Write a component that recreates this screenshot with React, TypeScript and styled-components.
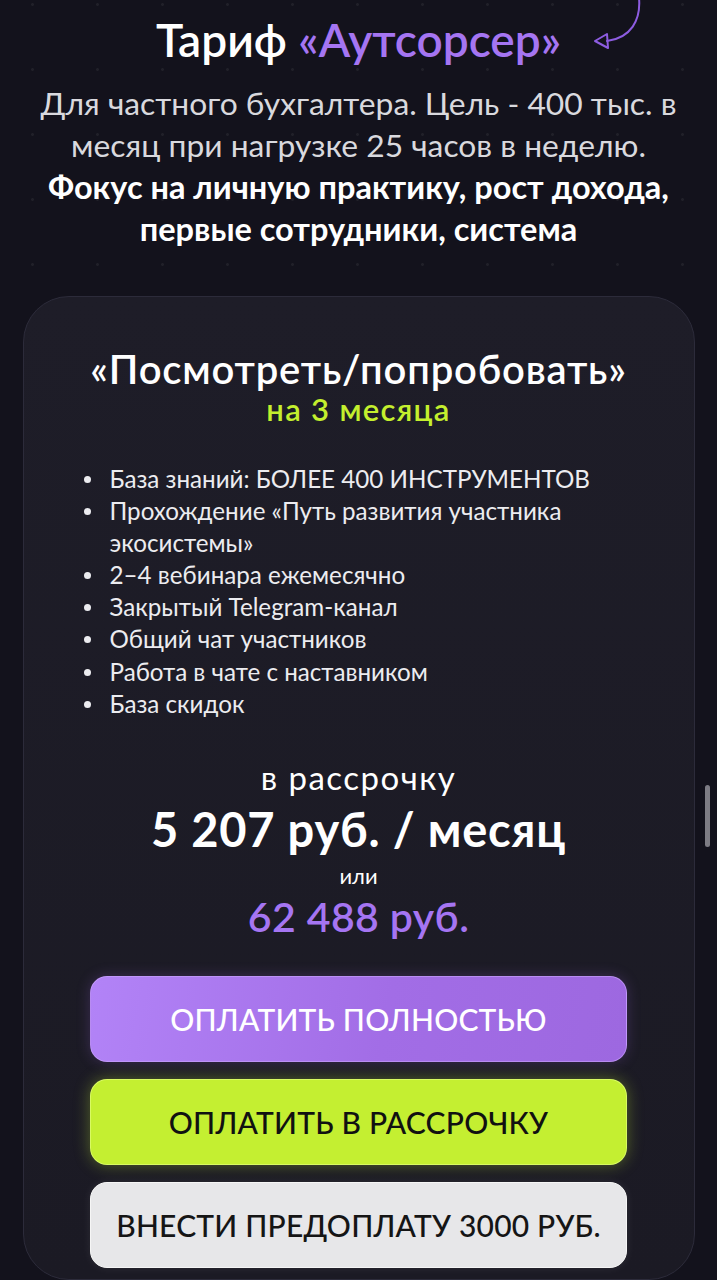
import React from "react";
import styled, { createGlobalStyle } from "styled-components";

const GlobalStyle = createGlobalStyle`
    html, body {
        margin: 0;
        padding: 0;
        background: #13121c;
    }
    body {
        font-family: Lato, "Noto Sans", sans-serif;
        color: #ffffff;
        -webkit-font-smoothing: antialiased;
    }
`

const Page = styled.main`
    width: 717px;
    height: 1280px;
    overflow: hidden;
    position: relative;
    background-color: #13121c;
    background-image: radial-gradient(circle, rgba(255,255,255,0.06) 1.2px, transparent 1.6px);
    background-size: 65px 65px;
    background-position: 0px 37px;

    display: flex;
    flex-direction: column;
    align-items: center;
`

const Header = styled.header`
    display: flex;
    flex-direction: column;
    align-items: center;
    padding-top: 12px;
`

const TitleRow = styled.div`
    position: relative;
`

const Title = styled.h1`
    margin: 0;
    font-size: 46px;
    font-weight: 600;
    line-height: 56px;
`

const Accent = styled.span`
    color: #a575f2;
`

const Arrow = styled.svg`
    position: absolute;
    left: 437px;
    top: -14px;
`

const Lead = styled.p`
    margin: 14px 0 0;
    text-align: center;
    font-size: 31.8px;
    line-height: 42px;
    color: #d9d9de;
    font-weight: 400;
`

const Strong = styled.b`
    color: #ffffff;
    font-weight: 700;
    font-size: 32.5px;
`

const Card = styled.section`
    box-sizing: border-box;
    width: 672px;
    margin-top: 46px;
    padding: 49px 66px 0;
    border: 1.5px solid #2c2b3a;
    border-radius: 46px;
    background: linear-gradient(180deg, #1e1d28 0%, #1b1a24 100%);
    flex: 1;

    display: flex;
    flex-direction: column;
    align-items: center;
`

const PlanName = styled.h2`
    margin: 0;
    font-size: 40px;
    font-weight: 600;
    line-height: 46px;
    letter-spacing: 0.8px;
`

const Period = styled.p`
    margin: 0;
    font-size: 31px;
    line-height: 34px;
    font-weight: 600;
    letter-spacing: 1.3px;
    color: #c4ef2e;
`

const Features = styled.ul`
    align-self: stretch;
    list-style: none;
    margin: 37px 0 0;
    padding: 0 0 0 20px;
    font-size: 24.2px;
    line-height: 32.1px;
    color: #ececf0;
`

const Feature = styled.li`
    position: relative;

    &::before {
        content: "";
        position: absolute;
        left: -26px;
        top: 13px;
        width: 7px;
        height: 7px;
        border-radius: 50%;
        background: #ececf0;
    }
`

const Price = styled.div`
    margin-top: 33px;
    display: flex;
    flex-direction: column;
    align-items: center;
`

const PriceLabel = styled.span`
    font-size: 33px;
    line-height: 48px;
    letter-spacing: 1.5px;
    font-weight: 400;
`

const Monthly = styled.span`
    font-size: 47px;
    line-height: 56px;
    font-weight: 700;
    letter-spacing: 0.8px;
`

const Or = styled.span`
    font-size: 22px;
    line-height: 38px;
`

const Total = styled.span`
    font-size: 41px;
    line-height: 44px;
    font-weight: 600;
    letter-spacing: 0.4px;
    color: #a575f2;
`

const Buttons = styled.div`
    margin-top: 37px;
    width: 537px;
    display: flex;
    flex-direction: column;
    gap: 17px;
`

const variants = {
    purple: `
        background: linear-gradient(100deg, #b283f7 0%, #a26de6 55%, #9d68e0 100%);
        color: #ffffff;
        border: 1.5px solid rgba(205, 170, 255, 0.55);
        box-shadow: 0 0 14px rgba(157, 104, 224, 0.25);
    `,
    lime: `
        background: #c4ef31;
        color: #111111;
        border: 1.5px solid rgba(225, 255, 120, 0.7);
        box-shadow: 0 0 16px rgba(196, 239, 49, 0.35);
    `,
    light: `
        background: #e7e7e9;
        color: #151515;
        border: 1.5px solid #f6f6f6;
        box-shadow: 0 0 10px rgba(255, 255, 255, 0.08);
    `,
}

const PayButton = styled.button<{ $variant: keyof typeof variants }>`
    box-sizing: border-box;
    height: 86px;
    border-radius: 17px;
    font-family: Lato, "Noto Sans", sans-serif;
    font-size: 30px;
    font-weight: 500;
    letter-spacing: 0.2px;
    text-transform: uppercase;
    cursor: pointer;
    ${({ $variant }) => variants[$variant]}
`

const ScrollThumb = styled.div`
    position: absolute;
    right: 7px;
    top: 785px;
    width: 5px;
    height: 62px;
    border-radius: 3px;
    background: #7d7c84;
`

const features = [
    "База знаний: БОЛЕЕ 400 ИНСТРУМЕНТОВ",
    "Прохождение «Путь развития участника экосистемы»",
    "2–4 вебинара ежемесячно",
    "Закрытый Telegram-канал",
    "Общий чат участников",
    "Работа в чате с наставником",
    "База скидок",
]

export default function App() {
    return (
        <>
            <GlobalStyle />
            <Page>
                <Header>
                    <TitleRow>
                        <Title>
                            Тариф <Accent>«Аутсорсер»</Accent>
                        </Title>
                        <Arrow width="60" height="62" viewBox="0 0 60 62" fill="none">
                            <path d="M46 0 C48 22 38 40 14 43" stroke="#8d5ce0" strokeWidth="2" strokeLinecap="round" />
                            <path d="M14 36 L2 43 L15 50 Z" stroke="#8d5ce0" strokeWidth="2" strokeLinejoin="round" />
                        </Arrow>
                    </TitleRow>
                    <Lead>
                        Для частного бухгалтера. Цель - 400 тыс. в<br />
                        месяц при нагрузке 25 часов в неделю.<br />
                        <Strong>
                            Фокус на личную практику, рост дохода,<br />
                            первые сотрудники, система
                        </Strong>
                    </Lead>
                </Header>
                <Card>
                    <PlanName>«Посмотреть/попробовать»</PlanName>
                    <Period>на 3 месяца</Period>
                    <Features>
                        {features.map((f) => (
                            <Feature key={f}>{f}</Feature>
                        ))}
                    </Features>
                    <Price>
                        <PriceLabel>в рассрочку</PriceLabel>
                        <Monthly>5 207 руб. / месяц</Monthly>
                        <Or>или</Or>
                        <Total>62 488 руб.</Total>
                    </Price>
                    <Buttons>
                        <PayButton $variant="purple">Оплатить полностью</PayButton>
                        <PayButton $variant="lime">Оплатить в рассрочку</PayButton>
                        <PayButton $variant="light">Внести предоплату 3000 руб.</PayButton>
                    </Buttons>
                </Card>
                <ScrollThumb />
            </Page>
        </>
    )
}
